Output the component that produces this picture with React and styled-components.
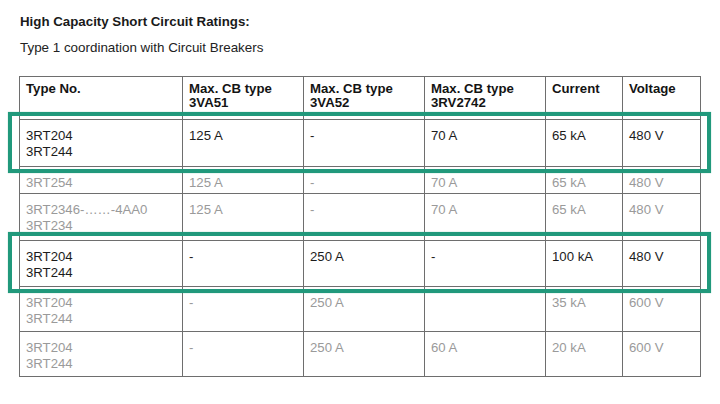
import React from "react";
import styled, { createGlobalStyle } from "styled-components";

const GlobalStyle = createGlobalStyle`
  html, body {
    margin: 0;
    background: #ffffff;
  }
  body {
    font-family: "Liberation Sans", Arial, sans-serif;
    -webkit-font-smoothing: antialiased;
  }
`;

const Page = styled.div`
  width: 720px;
  height: 404px;
  box-sizing: border-box;
  padding: 14px 0 0 20px;
  overflow: hidden;
`;

const Title = styled.h1`
  margin: 0;
  font-size: 13.3px;
  line-height: 16px;
  font-weight: 700;
  color: #1a1a1a;
`;

const Subtitle = styled.p`
  margin: 10px 0 0;
  font-size: 13.4px;
  line-height: 16px;
  color: #222;
`;

const TableWrap = styled.div`
  position: relative;
  margin: 20px 0 0 -1px;
  width: 682px;
`;

const Grid = styled.div`
  display: grid;
  grid-template-columns: 162px 120px 120px 120px 76px 77px;
  grid-template-rows: 42px 46px 26px 46px 45px 44px 44px;
  gap: 1px;
  padding: 1px;
  background: #6e6e6e;
`;

const Cell = styled.div`
  background: #ffffff;
  padding: ${(p) => (p.$head ? "5px 6px 0" : "8px 6px 0")};
  font-size: 13.2px;
  line-height: ${(p) => (p.$head ? "14px" : "16px")};
  font-weight: ${(p) => (p.$head ? 700 : 400)};
  color: ${(p) => (p.$head ? "#141414" : p.$muted ? "#9a9a9a" : "#1c1c1c")};
  white-space: pre-line;
  overflow: hidden;
`;

const Highlight = styled.div`
  position: absolute;
  left: -11px;
  top: ${(p) => p.$top}px;
  width: 703px;
  height: 61px;
  box-sizing: border-box;
  border: 4px solid #21997c;
  box-shadow: 0 0 1px rgba(33, 153, 124, 0.5);
  pointer-events: none;
`;

const headers = [
  "Type No.",
  "Max. CB type\n3VA51",
  "Max. CB type\n3VA52",
  "Max. CB type\n3RV2742",
  "Current",
  "Voltage",
];

const rows = [
  { muted: false, cells: ["3RT204\n3RT244", "125 A", "-", "70 A", "65 kA", "480 V"] },
  { muted: true, cells: ["3RT254", "125 A", "-", "70 A", "65 kA", "480 V"] },
  { muted: true, cells: ["3RT2346-……-4AA0\n3RT234", "125 A", "-", "70 A", "65 kA", "480 V"] },
  { muted: false, cells: ["3RT204\n3RT244", "-", "250 A", "-", "100 kA", "480 V"] },
  { muted: true, cells: ["3RT204\n3RT244", "-", "250 A", "", "35 kA", "600 V"] },
  { muted: true, cells: ["3RT204\n3RT244", "-", "250 A", "60 A", "20 kA", "600 V"] },
];

const App = () => {
  return (
    <Page>
      <GlobalStyle />
      <Title>High Capacity Short Circuit Ratings:</Title>
      <Subtitle>Type 1 coordination with Circuit Breakers</Subtitle>
      <TableWrap>
        <Grid>
          {headers.map((h) => (
            <Cell $head key={h}>
              {h}
            </Cell>
          ))}
          {rows.map((row, i) =>
            row.cells.map((c, j) => (
              <Cell $muted={row.muted} key={`${i}-${j}`}>
                {c}
              </Cell>
            ))
          )}
        </Grid>
        <Highlight $top={36} />
        <Highlight $top={156} />
      </TableWrap>
    </Page>
  );
};

export default App;
